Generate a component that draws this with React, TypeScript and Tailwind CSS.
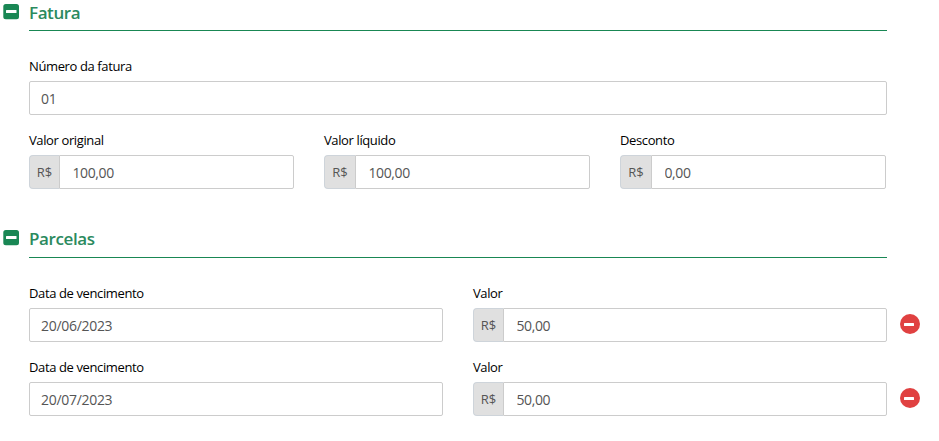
import type { ReactNode } from 'react';

const installments = [
  { dueDate: '20/06/2023', value: '50,00' },
  { dueDate: '20/07/2023', value: '50,00' },
];

function Section({
  title,
  className,
  titleClassName,
  children,
}: {
  title: string;
  className: string;
  titleClassName: string;
  children: ReactNode;
}) {
  return (
    <section className={`flex ${className}`}>
      <button type="button" aria-label={title} className="mt-1 h-4 w-[26px] shrink-0 pl-[3px]">
        <svg width="16" height="16" viewBox="0 0 16 16">
          <rect x="0.3" width="15.7" height="15.3" rx="2.5" fill="#198754" />
          <rect x="3" y="6" width="10.5" height="3" rx="0.5" fill="#fff" />
        </svg>
      </button>
      <div className="ml-[3px] w-[858px]">
        <h2
          className={`border-b border-[#198754] text-[17px] font-semibold tracking-[-0.4px] text-[#2b8a5e] ${titleClassName}`}
        >
          {title}
        </h2>
        {children}
      </div>
    </section>
  );
}

function Field({ label, children }: { label: string; children: ReactNode }) {
  return (
    <label className="flex min-w-0 flex-col">
      <span className="h-[23px] text-[13px] leading-4 tracking-[-0.38px] whitespace-nowrap text-black">{label}</span>
      {children}
    </label>
  );
}

function TextField({ label, value }: { label: string; value: string }) {
  return (
    <Field label={label}>
      <input
        defaultValue={value}
        className="h-[34px] w-full rounded-xs border border-[#cccccc] px-[11px] text-[14px] tracking-[-0.3px] text-[#555555] outline-none"
      />
    </Field>
  );
}

function MoneyField({ label, value, addon = 'w-[30px]' }: { label: string; value: string; addon?: string }) {
  return (
    <Field label={label}>
      <div className="flex h-[34px]">
        <span
          className={`flex shrink-0 items-center justify-center rounded-l border border-r-0 border-[#ced4da] bg-[#e0e0e0] pt-0.5 text-[13px] text-[#555555] ${addon}`}
        >
          R$
        </span>
        <input
          defaultValue={value}
          className="h-full w-full min-w-0 rounded-r-xs border border-[#cccccc] px-[12.5px] text-[14px] tracking-[-0.4px] text-[#555555] outline-none"
        />
      </div>
    </Field>
  );
}

function RemoveButton() {
  return (
    <button type="button" aria-label="Remover" className="mt-[29px] ml-[13px] h-5 w-5 shrink-0">
      <svg width="20" height="20" viewBox="0 0 20 20">
        <circle cx="10" cy="10" r="10" fill="#e04141" />
        <rect x="4" y="9" width="10" height="3" rx="0.5" fill="#fff" />
      </svg>
    </button>
  );
}

export default function App() {
  return (
    <div className="h-[441px] w-[939px] overflow-hidden bg-white font-['Open_Sans','Noto_Sans',sans-serif]">
      <Section title="Fatura" className="h-[226px]" titleClassName="h-[31px] leading-[25px]">
        <div className="flex flex-col gap-[17px] pt-[27px]">
          <TextField label="Número da fatura" value="01" />
          <div className="grid grid-cols-[265px_266px_266px] gap-[30px]">
            <MoneyField label="Valor original" value="100,00" />
            <MoneyField label="Valor líquido" value="100,00" addon="w-[31px]" />
            <MoneyField label="Desconto" value="0,00" addon="w-[31px]" />
          </div>
        </div>
      </Section>
      <Section title="Parcelas" className="h-[215px]" titleClassName="h-8 leading-[25px]">
        <div className="flex flex-col gap-[17px] pt-[27px]">
          {installments.map((item) => (
            <div key={item.dueDate} className="flex w-[900px]">
              <div className="grid shrink-0 grid-cols-[414px_414px] gap-[30px]">
                <TextField label="Data de vencimento" value={item.dueDate} />
                <MoneyField label="Valor" value={item.value} />
              </div>
              <RemoveButton />
            </div>
          ))}
        </div>
      </Section>
    </div>
  );
}
